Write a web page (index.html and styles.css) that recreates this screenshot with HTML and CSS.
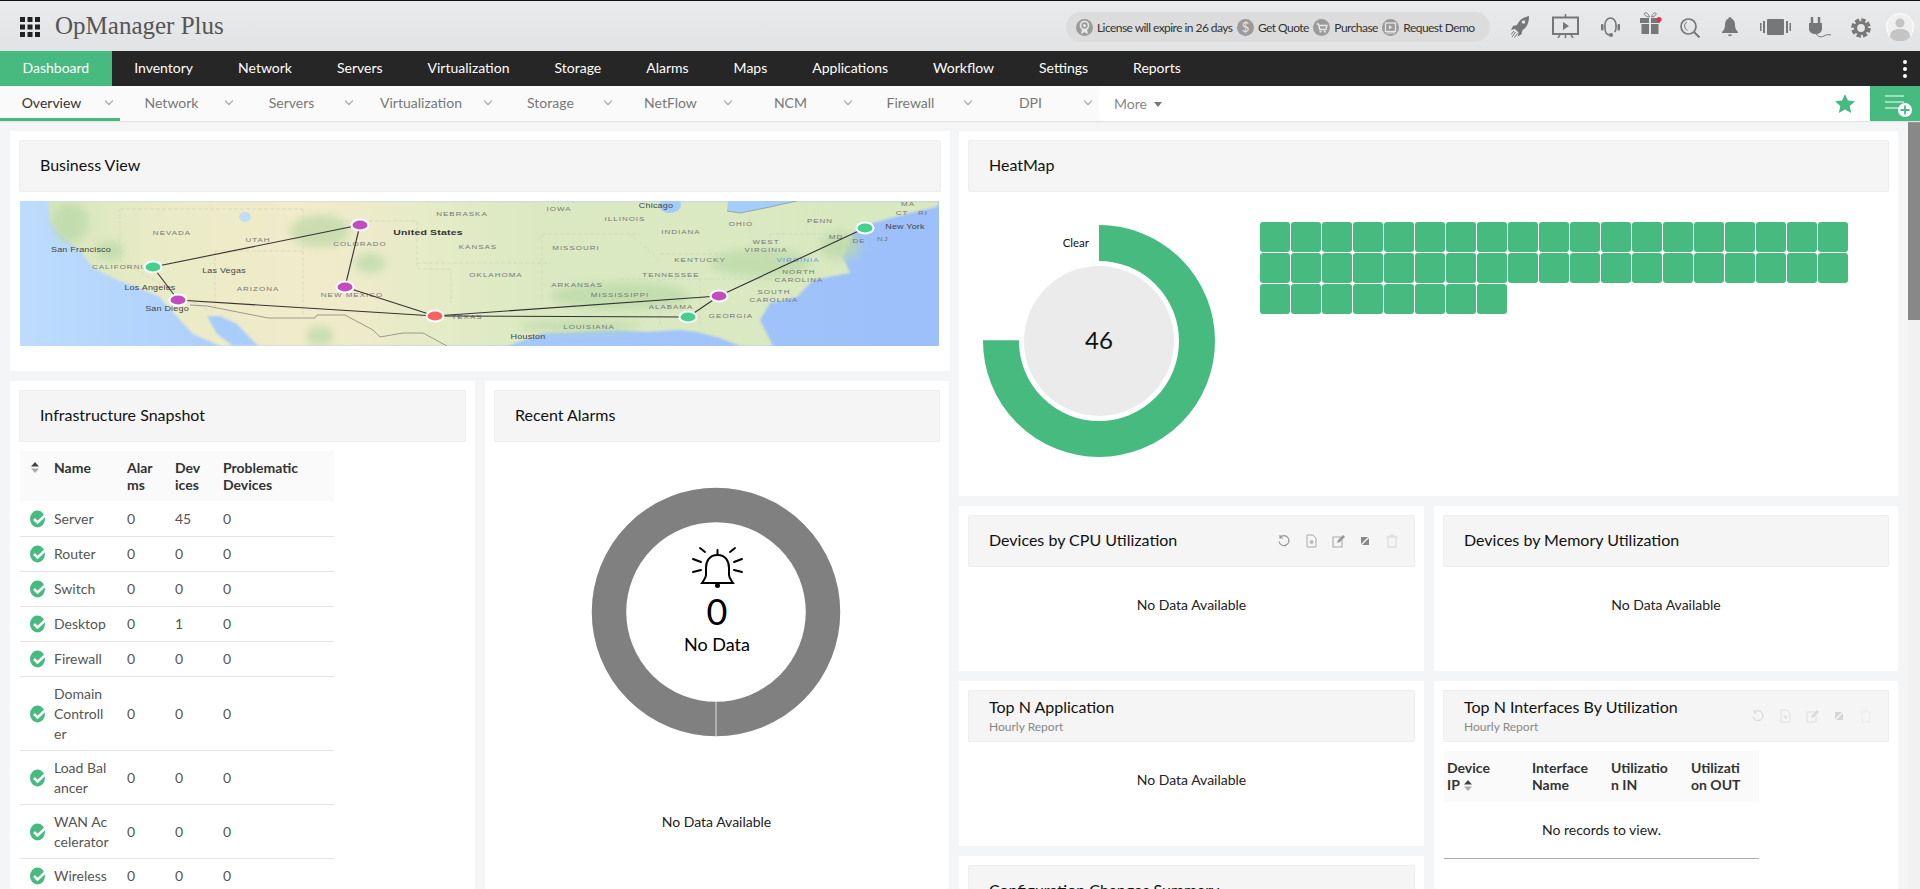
FILE: index.html
```html
<!DOCTYPE html>
<html lang="en">
<head>
<meta charset="utf-8">
<title>OpManager Plus</title>
<link rel="stylesheet" href="styles.css">
</head>
<body>
<div class="app">
  <header class="topbar">
    <svg class="apps" viewBox="0 0 20 20" width="20" height="20"><g fill="#222"><rect x="0" y="0" width="5" height="5"/><rect x="7.5" y="0" width="5" height="5"/><rect x="15" y="0" width="5" height="5"/><rect x="0" y="7.5" width="5" height="5"/><rect x="7.5" y="7.5" width="5" height="5"/><rect x="15" y="7.5" width="5" height="5"/><rect x="0" y="15" width="5" height="5"/><rect x="7.5" y="15" width="5" height="5"/><rect x="15" y="15" width="5" height="5"/></g></svg>
    <div class="brand">OpManager Plus</div>
    <div class="pill">
      <span class="pill-ico"><svg viewBox="0 0 17 17" width="17" height="17"><circle cx="8.5" cy="6.5" r="4" fill="none" stroke="#e6e6e6" stroke-width="1.6"/><circle cx="8.5" cy="6.5" r="1.5" fill="#e6e6e6"/><path d="M6 10l-1 5 3.5-1.8L12 15l-1-5z" fill="#e6e6e6"/></svg></span>
      <span class="pill-txt">License will expire in 26 days</span>
      <span class="pill-ico pill-dollar">$</span>
      <span class="pill-txt">Get Quote</span>
      <span class="pill-ico"><svg viewBox="0 0 17 17" width="17" height="17"><path d="M3.5 5h2l1.3 5.5h6L14 6.5H6" fill="none" stroke="#e6e6e6" stroke-width="1.4"/><circle cx="7.5" cy="12.6" r="1.1" fill="#e6e6e6"/><circle cx="11.8" cy="12.6" r="1.1" fill="#e6e6e6"/></svg></span>
      <span class="pill-txt">Purchase</span>
      <span class="pill-ico"><svg viewBox="0 0 17 17" width="17" height="17"><rect x="3.5" y="4" width="10" height="8.5" fill="none" stroke="#e6e6e6" stroke-width="1.3"/><path d="M7 6.2v4l3.4-2z" fill="#e6e6e6"/><path d="M4 14h9" stroke="#e6e6e6"/></svg></span>
      <span class="pill-txt">Request Demo</span>
    </div>
    <div class="tools">
      <svg class="t-rocket" viewBox="0 0 18 22" width="18" height="22"><path d="M18 0C13 1 8 4 6 9l-4 1-2 4 4-1 3.500 3.500-.8 4 3.800-2.300 1-4.200C16.500 11 18 6 18 0z" fill="#777"/><circle cx="12.500" cy="6" r="1.800" fill="#e4e5e6"/><path d="M1 21l3.500-5M3.500 21.500l3-4M0 18.500l3-3.500" stroke="#777" stroke-width="1"/></svg>
      <svg class="t-board" viewBox="0 0 27 24" width="27" height="24"><path d="M13.500 0v3" stroke="#777" stroke-width="1.500"/><rect x="1" y="3.500" width="25" height="16.500" fill="none" stroke="#777" stroke-width="2"/><path d="M11 8v8l6-4z" fill="#777"/><path d="M6 24l2-3M21 24l-2-3M13.500 24v-3" stroke="#777" stroke-width="1.500"/></svg>
      <svg class="t-head" viewBox="0 0 19 20" width="19" height="20"><path d="M4 9V8a5.500 7 0 0 1 11 0v1" fill="none" stroke="#777" stroke-width="1.600"/><rect x="0" y="7" width="2.500" height="6.500" rx="1" fill="#777"/><rect x="16.500" y="7" width="2.500" height="6.500" rx="1" fill="#777"/><path d="M4 9v2c0 5 2 7 5 7" fill="none" stroke="#777" stroke-width="1.600"/><path d="M15 9v2c0 2-.5 3-1.500 4" fill="none" stroke="#777" stroke-width="1.600"/><circle cx="10" cy="18" r="2" fill="#777"/></svg>
      <svg class="t-gift" viewBox="0 0 22 22" width="22" height="22"><path d="M9.500 5C6 5 3 2 5 1s4 2 4.500 4zm2 0c3.500 0 5.500-3 4-4s-3.500 2-4 4z" fill="none" stroke="#777" stroke-width="1"/><rect x="0" y="6" width="9" height="5" fill="#777"/><rect x="11" y="6" width="9" height="5" fill="#777"/><rect x="1.500" y="12" width="7.500" height="10" fill="#777"/><rect x="11" y="12" width="7.500" height="10" fill="#777"/><circle cx="19" cy="7.500" r="2.500" fill="#f03040"/></svg>
      <svg class="t-search" viewBox="0 0 20 20" width="20" height="20"><circle cx="8.500" cy="8.500" r="7.500" fill="none" stroke="#777" stroke-width="1.700"/><path d="M14 14l5.500 5.500" stroke="#777" stroke-width="2"/><path d="M7 4c-2 1-3 3-2 6 .5 1 1.500 2 2.500 2.500" fill="none" stroke="#777" stroke-width="1"/></svg>
      <svg class="t-bell" viewBox="0 0 16 20" width="16" height="20"><path d="M8 0c-1 0-1.500.8-1.500 1.600C4 2.500 3 5 3 8c0 3-1 5-3 7v1h16v-1c-2-2-3-4-3-7 0-3-1-5.500-3.500-6.400C9.500.8 9 0 8 0z" fill="#777"/><path d="M5.800 17.500a2.300 2.300 0 0 0 4.400 0z" fill="#777"/></svg>
      <svg class="t-strip" viewBox="0 0 31 16" width="31" height="16"><rect x="0" y="4" width="1.500" height="8" fill="#777"/><rect x="3" y="2" width="2" height="12" fill="#777"/><rect x="7" y="0" width="17" height="16" rx="1" fill="#777"/><rect x="26" y="2" width="2" height="12" fill="#777"/><rect x="29.500" y="4" width="1.500" height="8" fill="#777"/></svg>
      <svg class="t-plug" viewBox="0 0 22 21" width="22" height="21"><path d="M3 0v6M10 0v6" stroke="#777" stroke-width="2.500"/><path d="M0 6h13v6c0 3-3 5-6.500 5S0 15 0 12z" fill="#777"/><path d="M7 16c1 3 4 5 8 3 2-1 4-2 7-1" fill="none" stroke="#777" stroke-width="1"/></svg>
      <svg class="t-gear" viewBox="0 0 20 20" width="20" height="20"><circle cx="10" cy="10" r="5.500" fill="none" stroke="#777" stroke-width="3.200"/><circle cx="10" cy="10" r="8.200" fill="none" stroke="#777" stroke-width="3.200" stroke-dasharray="4.400 2.040"/></svg>
      <svg class="t-avatar" viewBox="0 0 28 28" width="28" height="28"><circle cx="14" cy="14" r="13.500" fill="#efefef" stroke="#fff"/><circle cx="14" cy="10" r="4.500" fill="#c4c4c4"/><path d="M4 24c0-6 4-8 10-8s10 2 10 8a13.500 13.500 0 0 1-20 0z" fill="#c4c4c4"/></svg>
    </div>
  </header>

  <nav class="mainnav">
    <a class="mainnav-item is-active">Dashboard</a>
    <a class="mainnav-item">Inventory</a>
    <a class="mainnav-item">Network</a>
    <a class="mainnav-item">Servers</a>
    <a class="mainnav-item">Virtualization</a>
    <a class="mainnav-item">Storage</a>
    <a class="mainnav-item">Alarms</a>
    <a class="mainnav-item">Maps</a>
    <a class="mainnav-item">Applications</a>
    <a class="mainnav-item">Workflow</a>
    <a class="mainnav-item">Settings</a>
    <a class="mainnav-item">Reports</a>
    <svg class="kebab" viewBox="0 0 4 20" width="4" height="20"><circle cx="2" cy="3" r="2" fill="#fff"/><circle cx="2" cy="10" r="2" fill="#fff"/><circle cx="2" cy="17" r="2" fill="#fff"/></svg>
  </nav>

  <div class="subnav">
    <div class="tabs">
      <div class="tab is-active"><span class="tab-label">Overview</span><i class="chev"></i></div>
      <div class="tab"><span class="tab-label">Network</span><i class="chev"></i></div>
      <div class="tab"><span class="tab-label">Servers</span><i class="chev"></i></div>
      <div class="tab"><span class="tab-label">Virtualization</span><i class="chev"></i></div>
      <div class="tab"><span class="tab-label">Storage</span><i class="chev"></i></div>
      <div class="tab"><span class="tab-label">NetFlow</span><i class="chev"></i></div>
      <div class="tab"><span class="tab-label">NCM</span><i class="chev"></i></div>
      <div class="tab"><span class="tab-label">Firewall</span><i class="chev"></i></div>
      <div class="tab"><span class="tab-label">DPI</span><i class="chev"></i></div>
    </div>
    <div class="more">More <span class="more-caret"></span></div>
    <svg class="star" viewBox="0 0 20 19" width="20" height="19"><path d="M10 0l2.900 6.500 7.100.8-5.300 4.700 1.500 7L10 15.400 3.800 19l1.500-7L0 7.300l7.100-.8z" fill="#47ba80"/></svg>
    <div class="addbox">
      <svg viewBox="0 0 32 26" width="32" height="26"><path d="M0 3h19M0 9h19M0 15h14" stroke="#fff" stroke-width="1.200"/><circle cx="20" cy="17" r="7" fill="#fff"/><path d="M20 12.500v9M15.500 17h9" stroke="#47ba80" stroke-width="1.800"/></svg>
    </div>
  </div>

  <div class="content">
    <main class="board">
      <div class="col-left">
        <section class="panel panel-map">
          <div class="title-bar"><h2 class="title">Business View</h2></div>
          <svg class="map" viewBox="0 0 919 145" preserveAspectRatio="none">
            <defs>
              <linearGradient id="sea" x1="0" x2="1" y1="0" y2="0"><stop offset="0" stop-color="#bddcfd"/><stop offset=".25" stop-color="#aacdfb"/><stop offset="1" stop-color="#9dbffa"/></linearGradient>
              <linearGradient id="land" x1="0" x2="1" y1="0" y2="0"><stop offset="0" stop-color="#d5e6bc"/><stop offset=".12" stop-color="#e9ebc6"/><stop offset=".3" stop-color="#f2ebcb"/><stop offset=".42" stop-color="#e6ebc8"/><stop offset=".55" stop-color="#dbe9c2"/><stop offset="1" stop-color="#d8e8c0"/></linearGradient>
              <filter id="soft" x="-30%" y="-30%" width="160%" height="160%"><feGaussianBlur stdDeviation="4"/></filter>
              <filter id="tiny" x="-10%" y="-10%" width="120%" height="120%"><feGaussianBlur stdDeviation=".8"/></filter>
            </defs>
            <rect width="919" height="145" fill="url(#sea)"/>
            <path d="M28 0L30 20 43 36 60 49 72 66 97 79 117 86 140 96 148 106 173 133 200 145H488L523 132 553 131 593 129 627 131 660 129 677 131 700 137 720 145H753L740 119 750 102 777 96 793 79 830 72 823 56 833 32 853 22 890 12 917 6 919 0z" fill="url(#land)" filter="url(#tiny)"/>
            <path d="M187 115L197 133 213 145H238L217 123 200 115z" fill="#a9cdfb" filter="url(#tiny)"/>
            <g filter="url(#soft)" fill="#bcd9a8" opacity=".75">
              <ellipse cx="50" cy="22" rx="18" ry="20"/>
              <ellipse cx="90" cy="50" rx="14" ry="10"/>
              <ellipse cx="300" cy="30" rx="30" ry="16"/>
              <ellipse cx="350" cy="62" rx="16" ry="10"/>
              <ellipse cx="300" cy="135" rx="14" ry="10"/>
              <ellipse cx="600" cy="95" rx="70" ry="14"/>
              <ellipse cx="740" cy="62" rx="50" ry="14"/>
              <ellipse cx="560" cy="125" rx="60" ry="6"/>
              <ellipse cx="820" cy="45" rx="20" ry="14"/>
            </g>
            <g fill="#a5cdfa">
              <ellipse cx="650" cy="4" rx="11" ry="8"/>
              <ellipse cx="225" cy="16" rx="6" ry="5" fill="#c2dcf5"/>
              <path d="M707 10L720 12 745 7 777 0H708z"/>
            </g>
            <path d="M707 10L720 12 745 7 777 0" fill="none" stroke="#8a9a9a" stroke-width=".8"/>
            <g fill="none" stroke="#d2d2c0" stroke-width=".7" stroke-dasharray="4 2">
              <path d="M100 8V60"/><path d="M100 8H283"/><path d="M283 8V50"/><path d="M283 50L195 50"/><path d="M283 20H397V62"/><path d="M397 62H530"/><path d="M397 62V68H431V102"/><path d="M522 33V100"/>
              <path d="M522 33H620"/><path d="M610 33L640 60"/><path d="M600 78H760"/><path d="M680 78V125"/><path d="M640 78V125"/><path d="M640 53H760"/><path d="M750 33V60"/><path d="M730 10V33"/><path d="M750 33H820"/><path d="M100 60L190 110"/><path d="M195 50V110"/><path d="M283 50V114"/>
            </g>
            <path d="M170 104L187 105 248 117 295 117 297 114 325 114 353 129 360 136 383 132 403 132 427 145" fill="none" stroke="#9a9a8e" stroke-width="1"/>
            <g transform="scale(1 .7)" class="map-label">
              <text x="442" y="21">NEBRASKA</text><text x="539" y="14">IOWA</text><text x="636" y="10" class="map-city">Chicago</text><text x="605" y="29">ILLINOIS</text><text x="888" y="7">MA</text><text x="882" y="20">CT</text><text x="903" y="20">RI</text><text x="800" y="32">PENN</text><text x="721" y="36">OHIO</text><text x="152" y="49">NEVADA</text><text x="408" y="49" class="map-country">United States</text><text x="885" y="40" class="map-city">New York</text><text x="661" y="47">INDIANA</text><text x="238" y="59">UTAH</text><text x="340" y="64">COLORADO</text><text x="816" y="54">MD</text><text x="839" y="60">DE</text><text x="863" y="57">NJ</text><text x="61" y="73" class="map-city">San Francisco</text><text x="458" y="69">KANSAS</text><text x="556" y="70">MISSOURI</text><text x="746" y="62">WEST</text><text x="746" y="73">VIRGINIA</text><text x="101" y="97">CALIFORNIA</text><text x="680" y="87">KENTUCKY</text><text x="778" y="87" class="map-water">VIRGINIA</text><text x="204" y="103" class="map-city">Las Vegas</text><text x="476" y="109">OKLAHOMA</text><text x="651" y="109">TENNESSEE</text><text x="779" y="105">NORTH</text><text x="779" y="116">CAROLINA</text><text x="130" y="127" class="map-city">Los Angeles</text><text x="238" y="129">ARIZONA</text><text x="557" y="123">ARKANSAS</text><text x="332" y="137">NEW MEXICO</text><text x="600" y="137">MISSISSIPPI</text><text x="754" y="133">SOUTH</text><text x="754" y="144">CAROLINA</text><text x="147" y="157" class="map-city">San Diego</text><text x="651" y="154">ALABAMA</text><text x="447" y="169">TEXAS</text><text x="711" y="167">GEORGIA</text><text x="569" y="183">LOUISIANA</text><text x="508" y="197" class="map-city">Houston</text>
            </g>
            <g fill="none" stroke="#333" stroke-width="1.100">
              <path d="M133 66L340 24"/><path d="M340 24L325 86"/><path d="M325 86L415 115"/><path d="M133 66L158 99"/><path d="M158 99L415 115"/><path d="M415 115L699 95"/><path d="M415 115L668 116"/><path d="M668 116L699 95"/><path d="M699 95L845 27"/>
            </g>
            <g stroke="#fff" stroke-width="2">
              <ellipse cx="133" cy="66" rx="8.500" ry="5.500" fill="#45d18b"/>
              <ellipse cx="340" cy="24" rx="8.500" ry="5.500" fill="#c24ebd"/>
              <ellipse cx="325" cy="86" rx="8.500" ry="5.500" fill="#c24ebd"/>
              <ellipse cx="158" cy="99" rx="8.500" ry="5.500" fill="#c24ebd"/>
              <ellipse cx="415" cy="115" rx="8.500" ry="5.500" fill="#fb6160"/>
              <ellipse cx="699" cy="95" rx="8.500" ry="5.500" fill="#c24ebd"/>
              <ellipse cx="668" cy="116" rx="8.500" ry="5.500" fill="#45d18b"/>
              <ellipse cx="845" cy="27" rx="8.500" ry="5.500" fill="#45d18b"/>
            </g>
          </svg>
        </section>

        <div class="row-left">
          <section class="panel panel-tall">
            <div class="title-bar"><h2 class="title">Infrastructure Snapshot</h2></div>
            <table class="grid grid-infra">
              <colgroup><col class="c-stat"><col class="c-name"><col class="c-num"><col class="c-num"><col class="c-prob"></colgroup>
              <thead>
                <tr>
                  <th class="th-sort"><svg viewBox="0 0 8 11" width="8" height="11"><path d="M4 0l4 4.500H0z" fill="#444"/><path d="M4 11L0 6.500h8z" fill="#aaa"/></svg></th>
                  <th>Name</th><th>Alar<br>ms</th><th>Dev<br>ices</th><th>Problematic<br>Devices</th>
                </tr>
              </thead>
              <tbody>
                <tr><td class="td-stat"><svg viewBox="0 0 16 18" width="16" height="18"><ellipse cx="7.500" cy="9" rx="7.500" ry="8.500" fill="#47ba80"/><path d="M4 9l3.500 3.500L15 5.500" fill="none" stroke="#fff" stroke-width="2.500"/></svg></td><td>Server</td><td>0</td><td>45</td><td>0</td></tr>
                <tr><td class="td-stat"><svg viewBox="0 0 16 18" width="16" height="18"><ellipse cx="7.500" cy="9" rx="7.500" ry="8.500" fill="#47ba80"/><path d="M4 9l3.500 3.500L15 5.500" fill="none" stroke="#fff" stroke-width="2.500"/></svg></td><td>Router</td><td>0</td><td>0</td><td>0</td></tr>
                <tr><td class="td-stat"><svg viewBox="0 0 16 18" width="16" height="18"><ellipse cx="7.500" cy="9" rx="7.500" ry="8.500" fill="#47ba80"/><path d="M4 9l3.500 3.500L15 5.500" fill="none" stroke="#fff" stroke-width="2.500"/></svg></td><td>Switch</td><td>0</td><td>0</td><td>0</td></tr>
                <tr><td class="td-stat"><svg viewBox="0 0 16 18" width="16" height="18"><ellipse cx="7.500" cy="9" rx="7.500" ry="8.500" fill="#47ba80"/><path d="M4 9l3.500 3.500L15 5.500" fill="none" stroke="#fff" stroke-width="2.500"/></svg></td><td>Desktop</td><td>0</td><td>1</td><td>0</td></tr>
                <tr><td class="td-stat"><svg viewBox="0 0 16 18" width="16" height="18"><ellipse cx="7.500" cy="9" rx="7.500" ry="8.500" fill="#47ba80"/><path d="M4 9l3.500 3.500L15 5.500" fill="none" stroke="#fff" stroke-width="2.500"/></svg></td><td>Firewall</td><td>0</td><td>0</td><td>0</td></tr>
                <tr><td class="td-stat"><svg viewBox="0 0 16 18" width="16" height="18"><ellipse cx="7.500" cy="9" rx="7.500" ry="8.500" fill="#47ba80"/><path d="M4 9l3.500 3.500L15 5.500" fill="none" stroke="#fff" stroke-width="2.500"/></svg></td><td>Domain<br>Controll<br>er</td><td>0</td><td>0</td><td>0</td></tr>
                <tr><td class="td-stat"><svg viewBox="0 0 16 18" width="16" height="18"><ellipse cx="7.500" cy="9" rx="7.500" ry="8.500" fill="#47ba80"/><path d="M4 9l3.500 3.500L15 5.500" fill="none" stroke="#fff" stroke-width="2.500"/></svg></td><td>Load Bal<br>ancer</td><td>0</td><td>0</td><td>0</td></tr>
                <tr><td class="td-stat"><svg viewBox="0 0 16 18" width="16" height="18"><ellipse cx="7.500" cy="9" rx="7.500" ry="8.500" fill="#47ba80"/><path d="M4 9l3.500 3.500L15 5.500" fill="none" stroke="#fff" stroke-width="2.500"/></svg></td><td>WAN Ac<br>celerator</td><td>0</td><td>0</td><td>0</td></tr>
                <tr><td class="td-stat"><svg viewBox="0 0 16 18" width="16" height="18"><ellipse cx="7.500" cy="9" rx="7.500" ry="8.500" fill="#47ba80"/><path d="M4 9l3.500 3.500L15 5.500" fill="none" stroke="#fff" stroke-width="2.500"/></svg></td><td>Wireless</td><td>0</td><td>0</td><td>0</td></tr>
              </tbody>
            </table>
          </section>

          <section class="panel panel-tall">
            <div class="title-bar"><h2 class="title">Recent Alarms</h2></div>
            <div class="alarm-donut">
              <svg viewBox="0 0 250 250" width="250" height="250">
                <circle cx="125" cy="125" r="107" fill="none" stroke="#808080" stroke-width="34.500"/>
                <path d="M125 214.500v36" stroke="#e2e2e2" stroke-width="1"/>
                <g fill="none" stroke="#000" stroke-width="2" stroke-linecap="round" transform="translate(1 0)">
                  <path d="M125.500 68c-8 0-11.500 6-11.500 13v7c0 3-2 5-4 8h31c-2-3-4-5-4-8v-7c0-7-3.500-13-11.500-13z"/>
                  <path d="M125.500 63v5"/>
                  <path d="M108 61l5 4M143 61l-5 4M101 72l8 3M150 72l-8 3M101 85l8-2M150 85l-8-2"/>
                </g>
                <circle cx="126.500" cy="98.500" r="2.500" fill="#000"/>
                <text x="126" y="138" class="alarm-count">0</text>
                <text x="126" y="164" class="alarm-label">No Data</text>
              </svg>
            </div>
            <p class="empty empty-alarm">No Data Available</p>
          </section>
        </div>
      </div>

      <div class="col-right">
        <section class="panel panel-heat">
          <div class="title-bar"><h2 class="title">HeatMap</h2></div>
          <div class="heat-body">
            <svg class="heat-donut" viewBox="0 0 232 232" width="232" height="232">
              <circle cx="116" cy="116" r="98" fill="none" stroke="#47ba80" stroke-width="36" stroke-dasharray="461.800 615.800" transform="rotate(-90 116 116)"/>
              <circle cx="116" cy="116" r="75" fill="#ebebeb"/>
              <text x="106" y="22" class="heat-clear">Clear</text>
              <text x="116" y="124" class="heat-count">46</text>
            </svg>
            <div class="tiles">
              <i></i><i></i><i></i><i></i><i></i><i></i><i></i><i></i><i></i><i></i><i></i><i></i><i></i><i></i><i></i><i></i><i></i><i></i><i></i>
              <i></i><i></i><i></i><i></i><i></i><i></i><i></i><i></i><i></i><i></i><i></i><i></i><i></i><i></i><i></i><i></i><i></i><i></i><i></i>
              <i></i><i></i><i></i><i></i><i></i><i></i><i></i><i></i>
            </div>
          </div>
        </section>

        <div class="row-right">
          <div class="stack">
            <section class="panel panel-md">
              <div class="title-bar">
                <h2 class="title">Devices by CPU Utilization</h2>
                <div class="actions">
                  <svg viewBox="0 0 14 14" width="14" height="14"><path d="M3 3.500a5 5 0 1 1-1 4M3 1v3h3" fill="none" stroke="#999" stroke-width="1.200"/></svg>
                  <svg viewBox="0 0 14 14" width="14" height="14"><path d="M3 1h6l3 3v9H3z" fill="none" stroke="#aaa" stroke-width="1"/><circle cx="7.500" cy="8" r="2" fill="#bbb"/></svg>
                  <svg viewBox="0 0 14 14" width="14" height="14"><path d="M10 3H2v10h9V6" fill="none" stroke="#aaa" stroke-width="1.100"/><path d="M6 9l1-3 5-5 2 2-5 5z" fill="#999"/></svg>
                  <svg viewBox="0 0 14 14" width="14" height="14"><path d="M3 3h7l-7 7zM11 4v7H4z" fill="#888"/></svg>
                  <svg viewBox="0 0 14 14" width="14" height="14"><path d="M3 3h8v10H3zM5 1.500h4M1.500 3h11" fill="none" stroke="#ddd" stroke-width="1.300"/></svg>
                </div>
              </div>
              <p class="empty">No Data Available</p>
            </section>
            <section class="panel panel-md">
              <div class="title-bar">
                <div><h2 class="title">Top N Application</h2><p class="subtitle">Hourly Report</p></div>
              </div>
              <p class="empty">No Data Available</p>
            </section>
            <section class="panel panel-md">
              <div class="title-bar"><h2 class="title">Configuration Changes Summary</h2></div>
            </section>
          </div>
          <div class="stack">
            <section class="panel panel-md">
              <div class="title-bar"><h2 class="title">Devices by Memory Utilization</h2></div>
              <p class="empty">No Data Available</p>
            </section>
            <section class="panel panel-long">
              <div class="title-bar">
                <div><h2 class="title">Top N Interfaces By Utilization</h2><p class="subtitle">Hourly Report</p></div>
                <div class="actions actions-faint">
                  <svg viewBox="0 0 14 14" width="14" height="14"><path d="M3 3.500a5 5 0 1 1-1 4M3 1v3h3" fill="none" stroke="#999" stroke-width="1.200"/></svg>
                  <svg viewBox="0 0 14 14" width="14" height="14"><path d="M3 1h6l3 3v9H3z" fill="none" stroke="#aaa" stroke-width="1"/><circle cx="7.500" cy="8" r="2" fill="#bbb"/></svg>
                  <svg viewBox="0 0 14 14" width="14" height="14"><path d="M10 3H2v10h9V6" fill="none" stroke="#aaa" stroke-width="1.100"/><path d="M6 9l1-3 5-5 2 2-5 5z" fill="#999"/></svg>
                  <svg viewBox="0 0 14 14" width="14" height="14"><path d="M3 3h7l-7 7zM11 4v7H4z" fill="#888"/></svg>
                  <svg viewBox="0 0 14 14" width="14" height="14"><path d="M3 3h8v10H3zM5 1.500h4M1.500 3h11" fill="none" stroke="#ddd" stroke-width="1.300"/></svg>
                </div>
              </div>
              <table class="grid grid-iface">
                <colgroup><col class="c-ip"><col class="c-if"><col class="c-in"><col class="c-out"></colgroup>
                <thead>
                  <tr>
                    <th>Device<br>IP <svg class="sort-inline" viewBox="0 0 8 11" width="8" height="11"><path d="M4 0l4 4.500H0z" fill="#444"/><path d="M4 11L0 6.500h8z" fill="#aaa"/></svg></th>
                    <th>Interface<br>Name</th><th>Utilizatio<br>n IN</th><th>Utilizati<br>on OUT</th>
                  </tr>
                </thead>
                <tbody><tr><td colspan="4" class="td-none">No records to view.</td></tr></tbody>
              </table>
            </section>
          </div>
        </div>
      </div>
    </main>
    <div class="scrollbar"><div class="scrollbar-thumb"></div></div>
  </div>
</div>
</body>
</html>
```
FILE: styles.css
```css
* { box-sizing: border-box; }
html, body { margin: 0; height: 100%; overflow: hidden; }
body { font-family: Lato, "Open Sans", sans-serif; font-size: 14px; color: #222; background: #f4f5f7; }
.app { display: flex; flex-direction: column; height: 889px; overflow: hidden; }

/* top bar */
.topbar { height: 51px; flex: none; display: flex; align-items: center; border-top: 1px solid #111; background: linear-gradient(#e9eaeb, #e2e3e4); padding-left: 20px; }
.apps { flex: none; margin-top: 1px; }
.brand { margin-left: 15px; font-family: "Liberation Serif", serif; font-size: 25px; color: #555; }
.pill { margin-left: auto; height: 30px; width: 424px; flex: none; display: flex; align-items: center; padding-left: 10px; border-radius: 15px; background: #dcdcdc; margin-top: 2px; }
.pill-ico { width: 17px; height: 17px; flex: none; border-radius: 50%; background: #9b9b9b; display: flex; align-items: center; justify-content: center; }
.pill-dollar { color: #e6e6e6; font-size: 13px; }
.pill-txt { font-size: 12px; letter-spacing: -.55px; color: #333; margin: 0 4.500px 0 4px; white-space: nowrap; }
.tools { flex: none; width: 430px; height: 50px; display: flex; align-items: center; padding-left: 21px; }
.t-rocket { margin: 2px 0 0 0; }
.t-board { margin: 0 0 0 23px; }
.t-head { margin: 2px 0 0 22px; }
.t-gift { margin: -6px 0 0 20px; }
.t-search { margin: 3px 0 0 18px; }
.t-bell { margin: 2px 0 0 22px; }
.t-strip { margin: 2px 0 0 22px; }
.t-plug { margin: 3px 0 0 18px; }
.t-gear { margin: 3px 0 0 20px; }
.t-avatar { margin: 2px 0 0 15px; }

/* main nav */
.mainnav { height: 35px; flex: none; display: flex; align-items: center; background: #262626; position: relative; }
.mainnav-item { height: 35px; line-height: 33px; padding: 0 22.500px; color: #fff; font-size: 14px; white-space: nowrap; }
.mainnav-item.is-active { background: #47ba80; }
.kebab { margin-left: auto; margin-right: 13px; }

/* sub nav */
.subnav { height: 35px; flex: none; display: flex; align-items: stretch; background: #fff; box-shadow: 0 1px 1px #e4e4e4; position: relative; }
.tabs { display: flex; background: #fafafa; }
.tab { min-width: 120px; height: 35px; display: flex; align-items: center; border-bottom: 3px solid transparent; }
.tab.is-active { border-bottom-color: #47ba80; }
.tab-label { flex: 1; padding: 0 20px; min-width: 103px; text-align: center; color: #777; white-space: nowrap; }
.tab.is-active .tab-label { color: #333; }
.chev { flex: none; width: 6px; height: 6px; margin: -2px 8px 0 3px; border-right: 1px solid #999; border-bottom: 1px solid #999; transform: rotate(45deg); }
.more { margin-left: 15px; align-self: center; color: #888; font-size: 14px; }
.more-caret { display: inline-block; margin-left: 4px; vertical-align: 2px; border: 4px solid transparent; border-top: 5px solid #777; border-bottom: 0; }
.star { margin: 8px 15px 0 auto; flex: none; }
.addbox { width: 50px; flex: none; background: #47ba80; display: flex; align-items: center; padding-left: 15px; padding-top: 5px; }

/* board */
.content { flex: 1; min-height: 0; display: flex; }
.board { flex: 1; min-width: 0; display: flex; gap: 9px; padding: 10px 10px 0; overflow: hidden; }
.col-left { width: 940px; flex: none; display: flex; flex-direction: column; gap: 10px; }
.col-right { width: 939px; flex: none; display: flex; flex-direction: column; gap: 10px; }
.row-left { flex: none; display: flex; gap: 10px; }
.row-left > .panel { width: 465px; }
.row-left > .panel + .panel { width: 464px; }
.row-right { flex: none; display: flex; gap: 10px; }
.stack { flex: none; display: flex; flex-direction: column; gap: 10px; }
.stack:first-child { width: 465px; }
.stack:last-child { width: 464px; }

.panel { flex: none; background: #fff; padding: 9px; }
.panel-map { height: 240px; }
.panel-tall { height: 620px; }
.panel-heat { height: 365px; }
.panel-md { height: 165px; }
.panel-long { height: 400px; }
.title-bar { height: 52px; display: flex; align-items: center; justify-content: space-between; padding: 0 15px 0 20px; background: #f5f5f5; border: 1px solid #eee; border-radius: 2px; }
.title { margin: 0; font-size: 16px; font-weight: 400; line-height: 20px; color: #111; }
.title-bar > .title { margin-bottom: 2px; }
.subtitle { margin: 2px 0 0; font-size: 12px; line-height: 16px; color: #888; }
.actions { display: flex; gap: 13px; }
.actions-faint { opacity: .28; }

.map { display: block; width: 919px; height: 145px; margin: 9px 0 0 1px; }
.map-label { font-family: "Liberation Sans", sans-serif; font-size: 8px; letter-spacing: 1px; fill: #777; text-anchor: middle; }
.map-city { font-size: 9px; letter-spacing: .2px; fill: #444; }
.map-country { font-size: 10.500px; font-weight: 700; letter-spacing: .2px; fill: #333; }
.map-water { fill: #5f9be8; }

/* tables */
.grid { border-collapse: collapse; table-layout: fixed; margin: 9px 0 0 1px; }
.grid th { background: #fafafa; height: 50px; padding: 8px 4px 0; text-align: left; vertical-align: top; font-size: 14px; font-weight: 700; line-height: 17px; color: #333; }
.grid td { height: 35px; padding: 7px 4px 6px; line-height: 20px; color: #555; border-bottom: 1px solid #e4e4e4; vertical-align: middle; }
.grid-infra { width: 314px; }
.c-stat { width: 30px; }
.c-name { width: 73px; }
.c-num { width: 48px; }
.c-prob { width: 115px; }
.th-sort svg { display: block; margin: 3px 0 0 7px; }
.td-stat svg { display: block; margin: 0 0 0 6px; }
.grid-iface { width: 315px; }
.grid-iface th { padding: 8px 3px 0; height: 51px; }
.c-ip { width: 85px; }
.c-if { width: 79px; }
.c-in { width: 80px; }
.c-out { width: 71px; }
.sort-inline { vertical-align: -1px; margin-left: 1px; }
.grid .td-none { height: 56px; text-align: center; color: #222; border-bottom: 1px solid #aaa; }

.empty { margin: 0; padding-top: 28px; text-align: center; line-height: 20px; color: #222; }
.alarm-donut { display: flex; justify-content: center; margin: 45px 0 0 -2px; }
.alarm-donut svg { display: block; }
.alarm-count { font-size: 36px; text-anchor: middle; fill: #000; }
.alarm-label { font-size: 18px; text-anchor: middle; fill: #000; }
.empty-alarm { padding-top: 75px; margin-left: -1px; }

/* heatmap */
.heat-body { display: flex; align-items: flex-start; padding: 30px 0 0 15px; }
.heat-donut { flex: none; margin-top: 3px; display: block; }
.heat-clear { font-size: 11.500px; text-anchor: end; fill: #111; }
.heat-count { font-size: 24px; text-anchor: middle; fill: #111; }
.tiles { margin-left: 45px; display: grid; grid-template-columns: repeat(19, 30px); grid-auto-rows: 30px; gap: 1px; }
.tiles i { display: block; background: #47ba80; border-radius: 3px; }

/* fake page scrollbar */
.scrollbar { width: 12px; flex: none; background: #f1f1f1; }
.scrollbar-thumb { height: 199px; background: #888; }
```
